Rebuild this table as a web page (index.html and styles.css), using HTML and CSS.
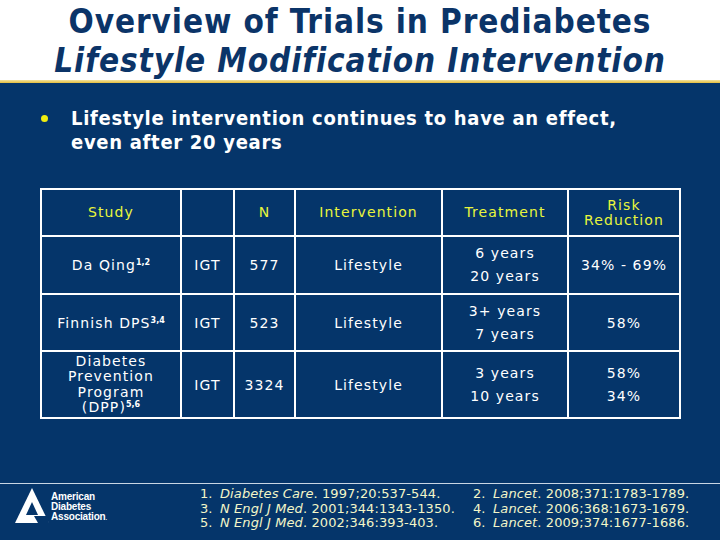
FILE: index.html
```html
<!DOCTYPE html>
<html>
<head>
<meta charset="utf-8">
<link rel="stylesheet" href="styles.css">
</head>
<body>
<div class="slide">
  <header class="head">
    <h1 class="title">Overview of Trials in Prediabetes</h1>
    <h2 class="subtitle">Lifestyle Modification Intervention</h2>
  </header>
  <div class="rule"></div>
  <main class="content">
    <ul class="bullets">
      <li>Lifestyle intervention continues to have an effect,<br>even after 20 years</li>
    </ul>
    <table class="trials">
      <colgroup>
        <col class="c1"><col class="c2"><col class="c3"><col class="c4"><col class="c5"><col class="c6">
      </colgroup>
      <thead>
        <tr class="hrow">
          <th>Study</th><th></th><th>N</th><th>Intervention</th><th>Treatment</th><th class="tight">Risk<br>Reduction</th>
        </tr>
      </thead>
      <tbody>
        <tr class="r1">
          <td>Da Qing<sup>1,2</sup></td><td>IGT</td><td>577</td><td>Lifestyle</td>
          <td><div class="yr">6 years</div><div class="yr">20 years</div></td>
          <td>34% - 69%</td>
        </tr>
        <tr class="r2">
          <td>Finnish DPS<sup>3,4</sup></td><td>IGT</td><td>523</td><td>Lifestyle</td>
          <td><div class="yr">3+ years</div><div class="yr">7 years</div></td>
          <td>58%</td>
        </tr>
        <tr class="r3">
          <td class="tight">Diabetes<br>Prevention<br>Program<br>(DPP)<sup>5,6</sup></td><td>IGT</td><td>3324</td><td>Lifestyle</td>
          <td><div class="yr">3 years</div><div class="yr">10 years</div></td>
          <td><div class="yr">58%</div><div class="yr">34%</div></td>
        </tr>
      </tbody>
    </table>
  </main>
  <footer class="foot">
    <div class="logo">
      <svg class="logo-mark" width="34" height="36" viewBox="0 0 34 36">
        <polygon points="17,0 34,35 0,35" fill="#ffffff"/>
        <polygon points="17,14 23,27 11,27" fill="#05356a"/>
        <polygon points="6,35 10,27 26,27 30,35" fill="#ffffff"/>
        <polygon points="19,28 33,28 34,35 23,35" fill="#05356a"/>
      </svg>
      <div class="logo-text">
        <span>American</span>
        <span>Diabetes</span>
        <span>Association<small>.</small></span>
      </div>
    </div>
    <ol class="refs">
      <li><span class="n">1.</span><i>Diabetes Care</i>. 1997;20:537-544.</li>
      <li><span class="n">2.</span><i>Lancet</i>. 2008;371:1783-1789.</li>
      <li><span class="n">3.</span><i>N Engl J Med</i>. 2001;344:1343-1350.</li>
      <li><span class="n">4.</span><i>Lancet</i>. 2006;368:1673-1679.</li>
      <li><span class="n">5.</span><i>N Engl J Med</i>. 2002;346:393-403.</li>
      <li><span class="n">6.</span><i>Lancet</i>. 2009;374:1677-1686.</li>
    </ol>
  </footer>
</div>
</body>
</html>
```

FILE: styles.css
```css
* { box-sizing: border-box; }
html, body { margin: 0; padding: 0; }
body { background: #05356a; }
.slide {
  width: 720px;
  height: 540px;
  display: flex;
  flex-direction: column;
  background: #05356a;
  overflow: hidden;
}
.head {
  background: #ffffff;
  height: 80px;
  padding-top: 3px;
  text-align: center;
  color: #0b3468;
  font-family: "DejaVu Sans Condensed", "DejaVu Sans", sans-serif;
  font-weight: bold;
}
.title, .subtitle {
  margin: 0;
  font-size: 33px;
  line-height: 38.5px;
  letter-spacing: 0.9px;
  font-weight: bold;
}
.subtitle { font-style: italic; }
.rule {
  height: 3px;
  background: linear-gradient(#f3e3a0, #e6bd3c);
}
.content {
  flex: 1;
  padding: 23px 0 0 40px;
}
.bullets {
  list-style: none;
  margin: 0;
  padding: 0 0 0 31px;
  color: #ffffff;
  font-family: "DejaVu Sans Condensed", "DejaVu Sans", sans-serif;
  font-weight: bold;
  font-size: 20px;
  letter-spacing: 0.7px;
  line-height: 24px;
}
.bullets li { position: relative; }
.bullets li::before {
  content: "";
  position: absolute;
  left: -30px;
  top: 9px;
  width: 7px;
  height: 7px;
  border-radius: 50%;
  background: #f0ee10;
}
.trials {
  margin-top: 34px;
  border-collapse: collapse;
  table-layout: fixed;
  width: 639px;
  font-family: "DejaVu Sans", sans-serif;
  font-size: 14px;
  letter-spacing: 1.1px;
  color: #ffffff;
  text-align: center;
  border: 2px solid #ffffff;
}
.c1 { width: 140px; } .c2 { width: 53px; } .c3 { width: 61px; }
.c4 { width: 147px; } .c5 { width: 126px; } .c6 { width: 112px; }
.trials th, .trials td {
  border: 2px solid #ffffff;
  padding: 0 1px;
  vertical-align: middle;
  font-weight: normal;
}
.trials th { color: #e9f53c; line-height: 15px; }
.hrow { height: 47px; }
.r1 { height: 58px; }
.r2 { height: 57px; }
.r3 { height: 67px; }
.tight { line-height: 15.5px; }
.yr { line-height: 23px; }
sup { font-size: 8px; line-height: 0; vertical-align: 5px; letter-spacing: 0; font-weight: bold; }
.foot {
  height: 57px;
  border-top: 1px solid #c9d6e4;
  display: flex;
  align-items: flex-start;
}
.logo {
  display: flex;
  align-items: flex-end;
  margin: 4px 0 0 15px;
  width: 185px;
}
.logo-mark { display: block; }
.logo-text {
  display: flex;
  flex-direction: column;
  color: #ffffff;
  font-family: "Liberation Sans", Arial, sans-serif;
  font-weight: bold;
  font-size: 10px;
  line-height: 10px;
  letter-spacing: -0.2px;
  margin-left: 2px;
  margin-bottom: 1px;
}
.logo-text small { font-size: 6px; }
.refs {
  list-style: none;
  margin: 3px 0 0 0;
  padding: 0;
  display: grid;
  grid-template-columns: 273px auto;
  color: #f3f6c8;
  font-family: "DejaVu Sans", sans-serif;
  font-size: 13px;
  letter-spacing: 0.1px;
  line-height: 14.5px;
}
.refs .n { display: inline-block; width: 20px; }
```
